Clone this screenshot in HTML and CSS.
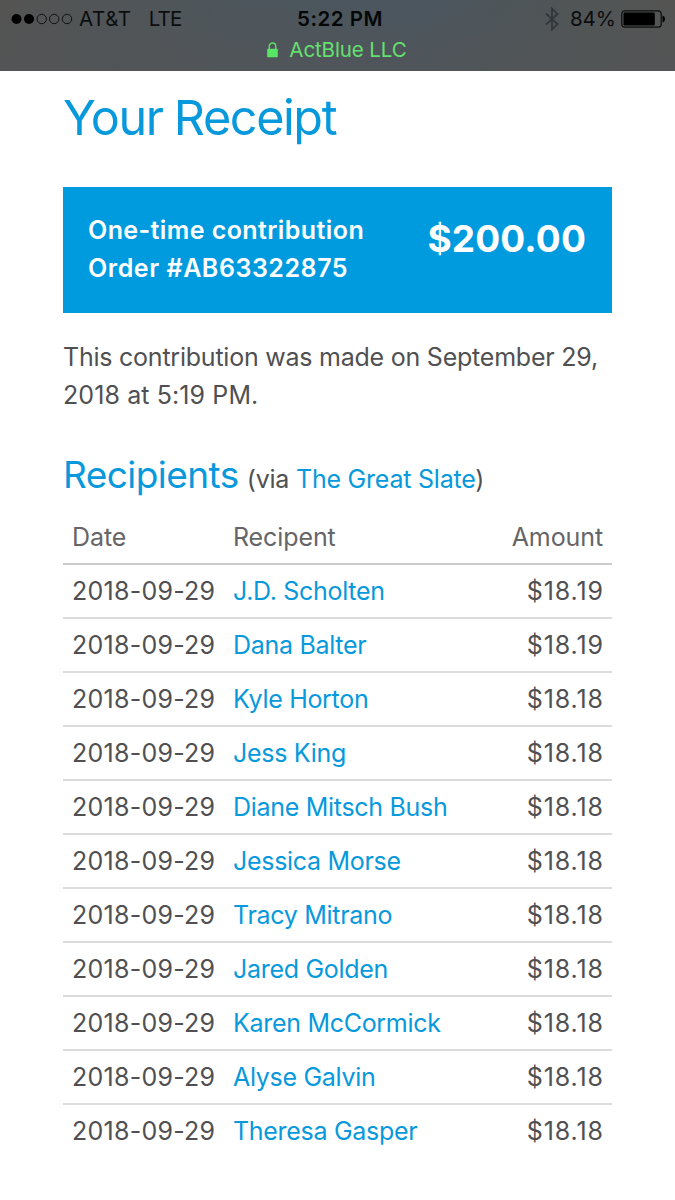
FILE: index.html
```html
<!DOCTYPE html>
<html lang="en">
<head>
<meta charset="utf-8">
<title>Your Receipt</title>
<link rel="stylesheet" href="styles.css">
</head>
<body>
<header class="chrome">
  <div class="status">
    <div class="carrier">
      <svg class="signal" width="62" height="12" viewBox="0 0 62 12">
        <circle cx="5.5" cy="6" r="5"/><circle cx="18" cy="6" r="5"/>
        <g fill="none" stroke="#101316" stroke-width="1"><circle cx="30.7" cy="6" r="4.7"/><circle cx="43.2" cy="6" r="4.7"/><circle cx="56" cy="6" r="4.7"/></g>
      </svg>
      <span class="name">AT&amp;T</span><span class="network">LTE</span>
    </div>
    <div class="time">5:22 PM</div>
    <div class="power">
      <svg class="bluetooth" width="14" height="24" viewBox="0 0 14 24"><path d="M1 6.5 12.5 17 7 22.5V1.5L12.5 7 1 17.5" fill="none" stroke="#31363a" stroke-width="1.7"/></svg>
      <span class="percent">84%</span>
      <svg class="battery" width="45" height="18" viewBox="0 0 45 18"><rect x=".8" y=".8" width="39.4" height="16.4" rx="3" fill="none" stroke="#0b0c0d" stroke-width="1.2"/><rect x="2.5" y="2.5" width="31.3" height="13" rx="1.2"/><path d="M41.5 5.5c3.3.8 3.3 6.2 0 7z"/></svg>
    </div>
  </div>
  <div class="site">
    <svg class="lock" width="11" height="16" viewBox="0 0 11 16"><rect x=".2" y="6.7" width="10.6" height="8.5" rx=".8" fill="#58e563"/><path d="M2.3 7V4.3a3.2 3.3 0 0 1 6.4 0V7" fill="none" stroke="#58e563" stroke-width="1.4"/></svg>
    <span class="host">ActBlue LLC</span>
  </div>
</header>
<main class="receipt">
  <h1 class="title"><span>Your Receipt</span></h1>
  <section class="summary">
    <p class="order"><span class="kind">One-time contribution</span><br><span class="number">Order #AB63322875</span></p>
    <p class="total">$200.00</p>
  </section>
  <p class="note">This contribution was made on September 29,<br><span class="when">2018 at 5:19 PM.</span></p>
  <h2 class="heading"><span class="label">Recipients</span><span class="via">(via <a>The Great Slate</a>)</span></h2>
  <table class="recipients">
    <thead><tr><th class="date">Date</th><th class="who">Recipent</th><th class="amount">Amount</th></tr></thead>
    <tbody>
      <tr><td>2018-09-29</td><td><a>J.D. Scholten</a></td><td class="amount">$18.19</td></tr>
      <tr><td>2018-09-29</td><td><a>Dana Balter</a></td><td class="amount">$18.19</td></tr>
      <tr><td>2018-09-29</td><td><a>Kyle Horton</a></td><td class="amount">$18.18</td></tr>
      <tr><td>2018-09-29</td><td><a>Jess King</a></td><td class="amount">$18.18</td></tr>
      <tr><td>2018-09-29</td><td><a>Diane Mitsch Bush</a></td><td class="amount">$18.18</td></tr>
      <tr><td>2018-09-29</td><td><a>Jessica Morse</a></td><td class="amount">$18.18</td></tr>
      <tr><td>2018-09-29</td><td><a>Tracy Mitrano</a></td><td class="amount">$18.18</td></tr>
      <tr><td>2018-09-29</td><td><a>Jared Golden</a></td><td class="amount">$18.18</td></tr>
      <tr><td>2018-09-29</td><td><a>Karen McCormick</a></td><td class="amount">$18.18</td></tr>
      <tr><td>2018-09-29</td><td><a>Alyse Galvin</a></td><td class="amount">$18.18</td></tr>
      <tr><td>2018-09-29</td><td><a>Theresa Gasper</a></td><td class="amount">$18.18</td></tr>
    </tbody>
  </table>
</main>
</body>
</html>
```

FILE: styles.css
```css
* { box-sizing: border-box; }
body { margin: 0; background: #fff; color: #505052; font-family: Inter, "Liberation Sans", sans-serif; font-size: 25px; line-height: 38px; }
h1, h2, p { margin: 0; font-weight: 400; }
svg { display: block; flex: none; }
a { color: #0799dc; }

.chrome { height: 71px; background: linear-gradient(to bottom, rgba(82, 84, 86, 0), rgba(82, 84, 86, 0.6)), linear-gradient(to right, #545453, #4d565c 35%, #4b565f 62%, #4f5557 80%, #545453); }
.status { height: 36px; display: grid; grid-template-columns: 1fr auto 1fr; align-items: center; padding: 1px 9px 0 11px; font-size: 20.5px; line-height: 34px; color: #0b0d0f; }
.carrier { display: flex; align-items: center; }
.name { margin-left: 6px; letter-spacing: 0.6px; }
.network { margin-left: 17px; letter-spacing: -0.8px; }
.time { padding-left: 3px; font-weight: 600; letter-spacing: 0.5px; color: #050607; }
.power { display: flex; align-items: center; justify-content: flex-end; }
.bluetooth { margin-right: 11px; }
.percent { margin-right: 5px; }
.site { display: flex; align-items: center; justify-content: center; gap: 11px; height: 27px; padding-right: 1px; font-size: 20.5px; letter-spacing: -0.1px; color: #65e070; }

.receipt { padding: 0 63px; }
.title { height: 116px; padding-top: 17px; font-size: 48.5px; line-height: 60px; letter-spacing: -1.4px; word-spacing: -1px; color: #0799dc; }
.summary { display: flex; justify-content: space-between; height: 126px; padding: 24px 26px 0 25px; background: #009bdf; color: #fff; }
.order { font-size: 25px; font-weight: 600; letter-spacing: 0.42px; }
.number { letter-spacing: 0.55px; }
.total { font-size: 37px; font-weight: 650; line-height: 56px; letter-spacing: 0.15px; }
.note { padding-top: 25px; letter-spacing: -0.23px; }
.when { letter-spacing: 0.1px; }
.heading { margin-top: 36px; height: 62px; line-height: 50px; white-space: nowrap; }
.label { margin-right: 8px; font-size: 37px; letter-spacing: -0.55px; color: #0799dc; }
.via { font-size: 25px; letter-spacing: -0.22px; }

.recipients { width: 549px; margin-top: -1px; border-collapse: separate; border-spacing: 0; table-layout: fixed; }
.recipients th, .recipients td { height: 54px; padding: 0 9px; line-height: 50px; text-align: left; font-weight: 400; border-bottom: 2px solid #dcdcdd; white-space: nowrap; }
.recipients td { letter-spacing: 0.25px; }
.recipients thead th { color: #656567; border-bottom-color: #cacacb; letter-spacing: -0.1px; }
.recipients tr:last-child td { border-bottom-color: transparent; }
.recipients .date { width: 161px; }
.recipients .who { width: 252px; }
.recipients a { letter-spacing: -0.3px; }
.recipients th.amount, .recipients td.amount { text-align: right; }
.recipients td.amount { padding-right: 8px; letter-spacing: 0.9px; }
```
